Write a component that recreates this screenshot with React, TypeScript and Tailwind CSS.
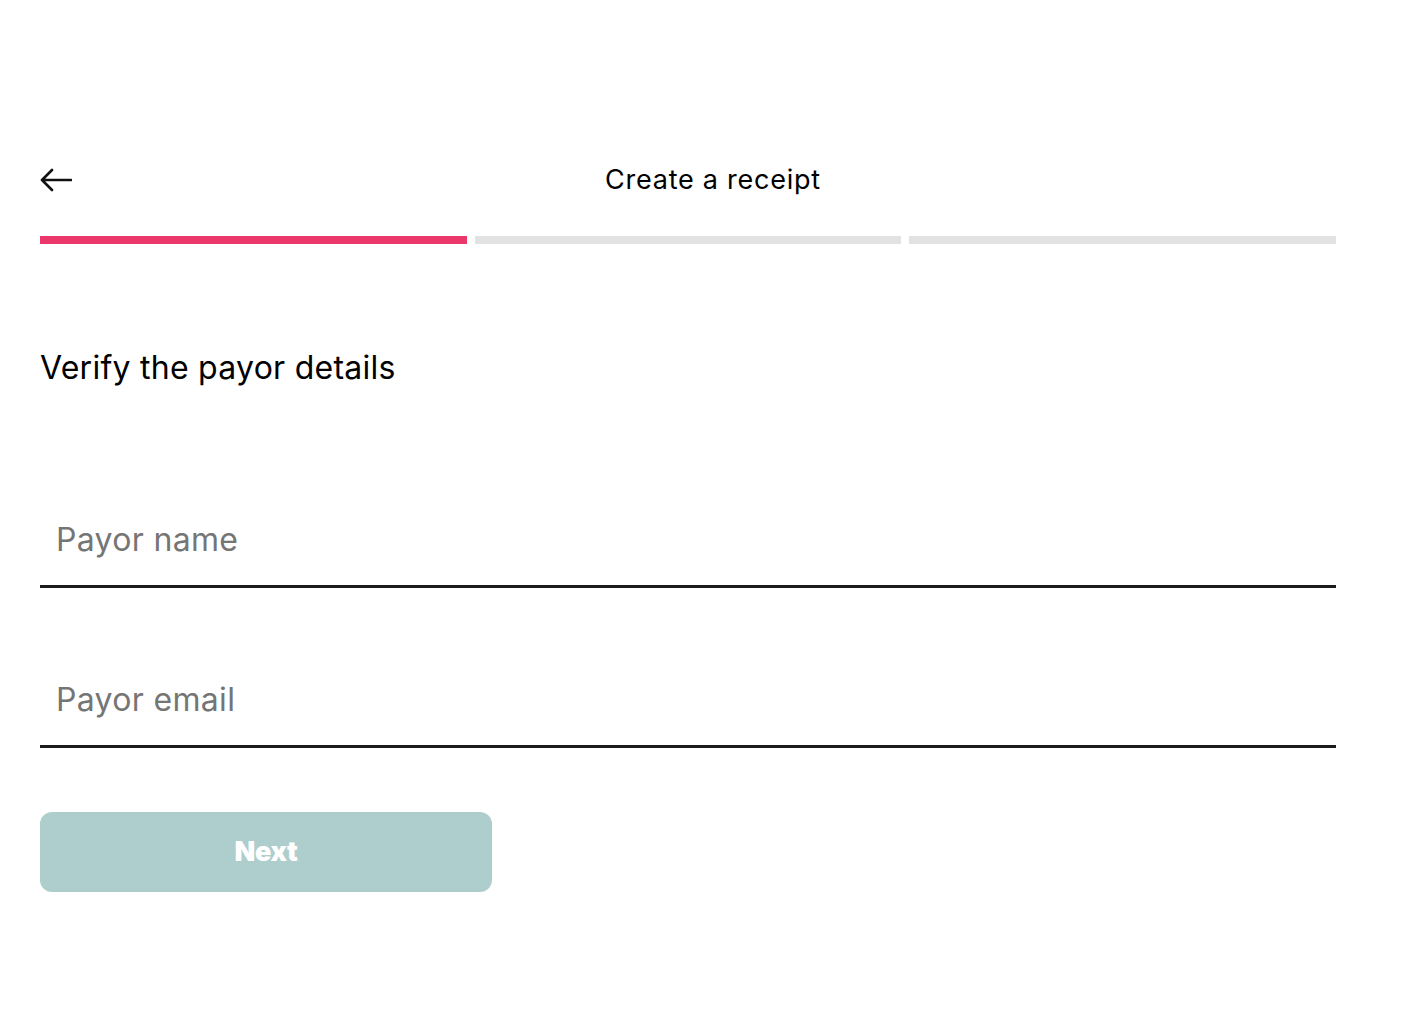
import { useState } from "react";

const steps = [true, false, false];

export default function App() {
  const [name, setName] = useState("");
  const [email, setEmail] = useState("");

  return (
    <div className="min-h-screen w-full bg-white font-['Inter',sans-serif] text-black">
      <div className="px-[40px] pt-[160px] w-[1376px]">
        {/* Header */}
        <div className="flex items-center h-[40px]">
          <button className="w-[32px] h-[40px] flex items-center">
            <svg width="32" height="24" viewBox="0 0 32 24" fill="none">
              <path
                d="M31 12H2M12 2L2 12L12 22"
                stroke="#111"
                strokeWidth="2.6"
                strokeLinecap="round"
                strokeLinejoin="round"
              />
            </svg>
          </button>
          <h1 className="flex-1 text-center pl-[18px] text-[27px] leading-[40px] tracking-[0.028em]">
            Create a receipt
          </h1>
        </div>

        {/* Progress */}
        <div className="mt-[36px] grid grid-cols-3 gap-[8px]">
          {steps.map((done, idx) => (
            <div
              key={idx}
              className={`h-[8px] ${done ? "bg-[#eb386b]" : "bg-[#e2e2e2]"}`}
            />
          ))}
        </div>

        <h2 className="mt-[102px] text-[32px] leading-[44px] tracking-[0.008em]">
          Verify the payor details
        </h2>

        {/* Inputs */}
        <div className="mt-[118px]">
          <input
            value={name}
            onChange={(e) => setName(e.target.value)}
            placeholder="Payor name"
            className="w-full h-[80px] px-[16px] pb-[14px] text-[32px] tracking-[0.01em] border-b-[3px] border-[#1c1c1c] outline-none placeholder:text-[#757575] bg-transparent"
          />
        </div>
        <div className="mt-[80px]">
          <input
            value={email}
            onChange={(e) => setEmail(e.target.value)}
            placeholder="Payor email"
            className="w-full h-[80px] px-[16px] pb-[14px] text-[32px] tracking-[0.01em] border-b-[3px] border-[#1c1c1c] outline-none placeholder:text-[#757575] bg-transparent"
          />
        </div>

        <button className="mt-[64px] w-[452px] h-[80px] rounded-[12px] bg-[#adcecd] text-white text-[27px] font-black tracking-[-0.01em]">
          Next
        </button>
      </div>
    </div>
  );
}
